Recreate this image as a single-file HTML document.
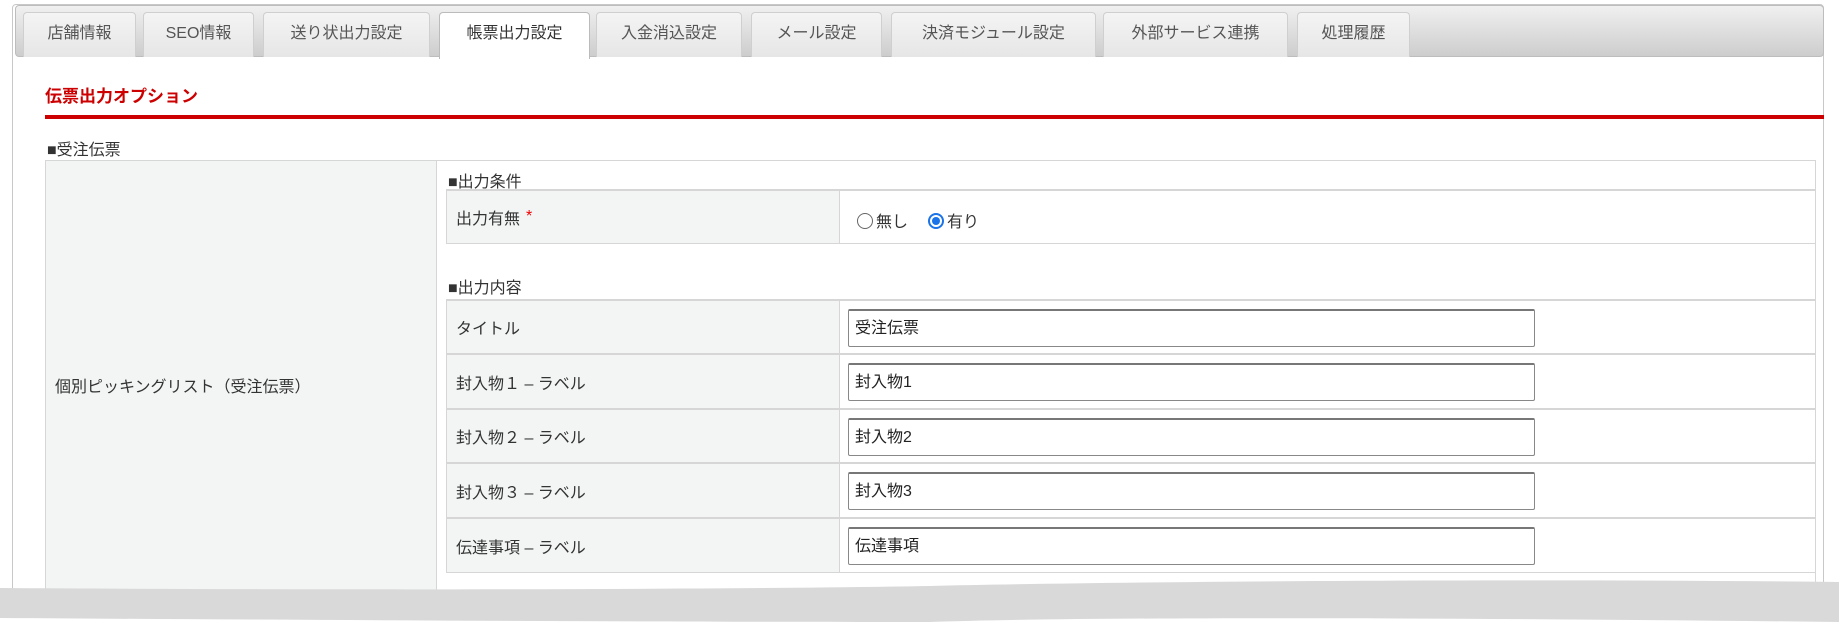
<!DOCTYPE html>
<html><head><meta charset="utf-8"><style>
*{box-sizing:border-box;margin:0;padding:0}
html,body{width:1839px;height:626px;overflow:hidden}
body{background:#fff;position:relative;font-family:"Liberation Sans","Noto Sans CJK JP",sans-serif;color:#333;font-size:16px}
.abs{position:absolute}
.frame{left:12px;top:4px;width:1812px;height:610px;border:1px solid #c8c8c8;border-radius:4px}
.bar{left:15px;top:5px;width:1809px;height:52px;background:linear-gradient(#f0f0f0,#cdcdcd);border:1px solid #bdbdbd;border-radius:4px}
.tab{position:absolute;top:12px;height:45px;background:linear-gradient(#f4f4f4,#e6e6e6);border:1px solid #cfcfcf;border-bottom:none;border-radius:4px 4px 0 0;color:#555;font-size:16px;text-align:center;line-height:42px}
.tab.on{background:#fff;border-color:#bbb;color:#333;height:47px}
.h{left:45px;top:82px;color:#cc0000;font-weight:bold;font-size:17px}
.red{left:45px;top:115px;width:1779px;height:4px;background:#cc0000}
.lc{background:#f3f4f4;border:1px solid #d6d6d6}
.row{position:absolute;left:446px;width:1370px;border:1px solid #d6d6d6;border-top:2px solid #d6d6d6;background:#fff}
.row .l{position:absolute;left:0;top:0;bottom:0;width:393px;background:#f3f4f4;border-right:1px solid #d6d6d6;padding-left:9px;display:flex;align-items:center}
.inp{position:absolute;left:401px;width:687px;height:38px;border:1px solid #888;border-top:2px solid #777;border-radius:2px;padding-left:6px;line-height:35px;font-size:16px;color:#222}
.rad{display:inline-block;width:16px;height:16px;border:1px solid #666;border-radius:50%;vertical-align:-2px;margin-right:3px;background:#fff;position:relative}
.rad.on{border-color:#1a73e8;border-width:2px}
.rad.on:after{content:"";position:absolute;left:2px;top:2px;width:8px;height:8px;border-radius:50%;background:#1a73e8}
</style></head><body>
<div class="abs frame"></div>
<div class="abs bar"></div>
<div class="tab" style="left:23px;width:113px">店舗情報</div>
<div class="tab" style="left:143px;width:111px">SEO情報</div>
<div class="tab" style="left:263px;width:167px">送り状出力設定</div>
<div class="tab on" style="left:439px;width:151px">帳票出力設定</div>
<div class="tab" style="left:596px;width:146px">入金消込設定</div>
<div class="tab" style="left:751px;width:131px">メール設定</div>
<div class="tab" style="left:891px;width:205px">決済モジュール設定</div>
<div class="tab" style="left:1103px;width:185px">外部サービス連携</div>
<div class="tab" style="left:1297px;width:113px">処理履歴</div>
<div class="abs h">伝票出力オプション</div>
<div class="abs red"></div>
<div class="abs" style="left:47px;top:136px">■受注伝票</div>
<div class="abs" style="left:45px;top:160px;width:1771px;height:450px;border:1px solid #d6d6d6"></div>
<div class="abs lc" style="left:45px;top:160px;width:392px;height:450px"></div>
<div class="abs" style="left:55px;top:373px">個別ピッキングリスト（受注伝票）</div>
<div class="abs" style="left:448px;top:168px">■出力条件</div>
<div class="row" style="top:189px;height:55px"><div class="l">出力有無 <span style="color:#e00;margin-left:6px">*</span></div>
<div style="position:absolute;left:410px;top:17px"><span class="rad"></span>無し<span style="display:inline-block;width:20px"></span><span class="rad on"></span>有り</div></div>
<div class="abs" style="left:448px;top:274px">■出力内容</div>
<div class="row" style="top:299px;height:55px"><div class="l">タイトル</div><div class="inp" style="top:8px">受注伝票</div></div>
<div class="row" style="top:353px;height:56px"><div class="l">封入物１ – ラベル</div><div class="inp" style="top:8px">封入物1</div></div>
<div class="row" style="top:408px;height:55px"><div class="l">封入物２ – ラベル</div><div class="inp" style="top:8px">封入物2</div></div>
<div class="row" style="top:462px;height:56px"><div class="l">封入物３ – ラベル</div><div class="inp" style="top:8px">封入物3</div></div>
<div class="row" style="top:517px;height:56px"><div class="l">伝達事項 – ラベル</div><div class="inp" style="top:8px">伝達事項</div></div>
<svg class="abs" style="left:0;top:570px" width="1839" height="56"><rect x="0" y="30" width="1839" height="26" fill="#fff"/><path d="M0 18 C300 20 700 20 930 16 C1100 12 1500 8 1839 12 L1839 52 C1500 48 1100 46 930 52 C700 52 300 50 0 48 Z" fill="#d9d9d9"/></svg>
</body></html>
